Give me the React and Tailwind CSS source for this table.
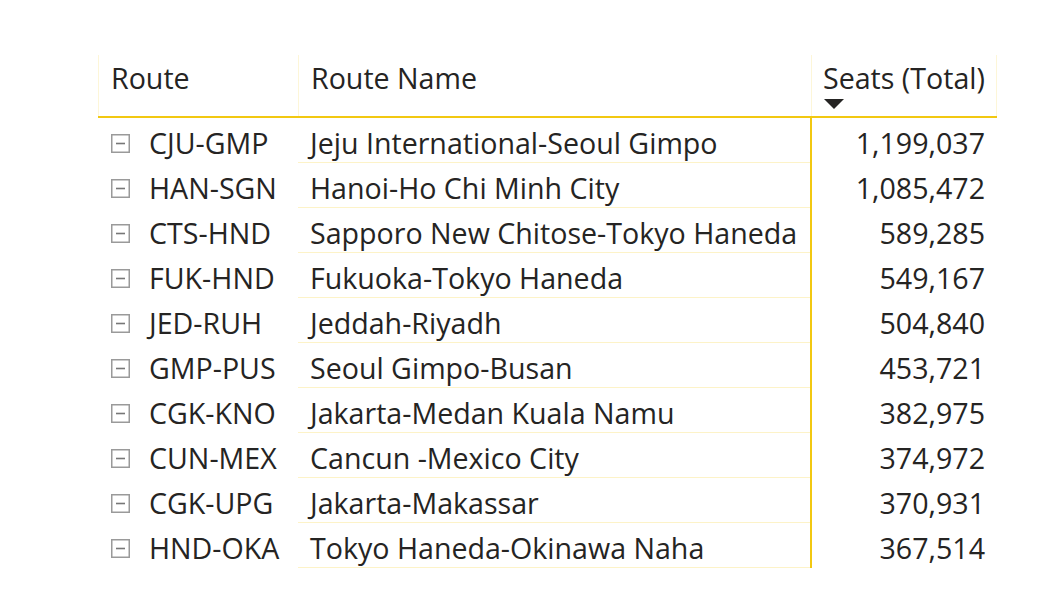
import React from "react";

const rows = [
  ["CJU-GMP", "Jeju International-Seoul Gimpo", "1,199,037"],
  ["HAN-SGN", "Hanoi-Ho Chi Minh City", "1,085,472"],
  ["CTS-HND", "Sapporo New Chitose-Tokyo Haneda", "589,285"],
  ["FUK-HND", "Fukuoka-Tokyo Haneda", "549,167"],
  ["JED-RUH", "Jeddah-Riyadh", "504,840"],
  ["GMP-PUS", "Seoul Gimpo-Busan", "453,721"],
  ["CGK-KNO", "Jakarta-Medan Kuala Namu", "382,975"],
  ["CUN-MEX", "Cancun -Mexico City", "374,972"],
  ["CGK-UPG", "Jakarta-Makassar", "370,931"],
  ["HND-OKA", "Tokyo Haneda-Okinawa Naha", "367,514"],
];

const MinusBox = () => (
  <svg width="19" height="19" viewBox="0 0 19 19" className="shrink-0">
    <rect x="0.75" y="0.75" width="17.5" height="17.5" fill="white" stroke="#9a9a9a" strokeWidth="1.5" />
    <line x1="5" y1="9.5" x2="14" y2="9.5" stroke="#777" strokeWidth="1.6" />
  </svg>
);

export default function App() {
  return (
    <div
      className="w-[1037px] h-[610px] bg-white text-[#252423]"
      style={{ fontFamily: "'Open Sans', 'Noto Sans', sans-serif" }}
    >
      <div className="pt-[55px] pl-[98px]">
        {/* Cabecera */}
        <div className="flex h-[63px] border-b-2 border-[#f2c811] w-[899px] text-[28.6px] leading-[38px]">
          <div className="w-[200px] border-l border-[#fdf6d8] pl-3 pt-[4px]">Route</div>
          <div className="w-[513px] border-l border-[#fdf6d8] pl-3 pt-[4px]">Route Name</div>
          <div className="w-[186px] border-l border-r border-[#fdf6d8] pl-[11px] pt-[4px]">
            <div>Seats (Total)</div>
            <svg width="20" height="11" viewBox="0 0 20 11" className="mt-[2px] ml-[1px]">
              <polygon points="0,0 20,0 10,10" fill="#252423" />
            </svg>
          </div>
        </div>

        {/* Filas */}
        {rows.map(([code, name, seats]) => (
          <div key={code} className="flex h-[45px] w-[899px] text-[28.6px] leading-[38px]">
            <div className="w-[200px] flex items-center pl-[13px] gap-[19px] pt-[5px]">
              <MinusBox />
              <span className="whitespace-nowrap">{code}</span>
            </div>
            <div className="w-[512px] flex items-center pl-[12px] pt-[5px] border-b border-[#fdf3c8] whitespace-nowrap">
              {name}
            </div>
            <div className="w-[187px] flex items-center justify-end pr-[12px] pt-[5px] border-l-2 border-[#f2c811]">
              {seats}
            </div>
          </div>
        ))}
      </div>
    </div>
  );
}
